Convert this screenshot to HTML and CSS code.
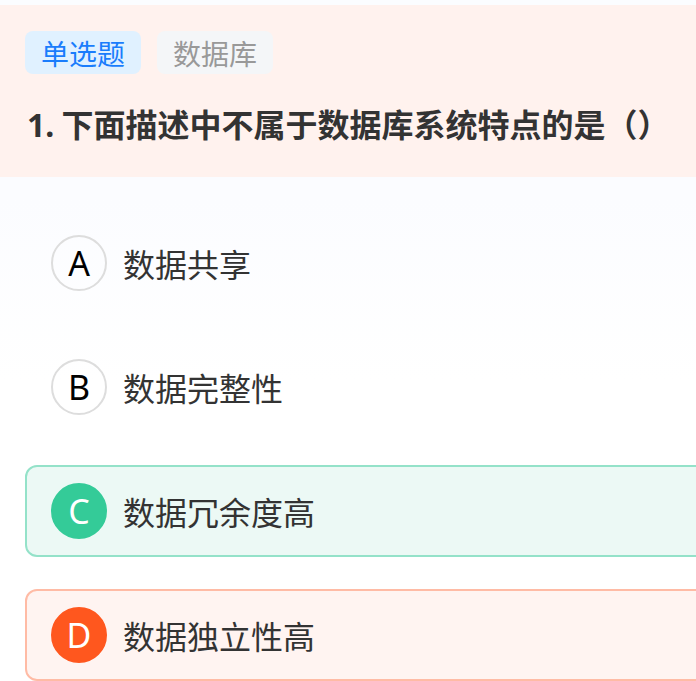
FILE: index.html
```html
<!DOCTYPE html>
<html lang="zh-CN">
<head>
<meta charset="utf-8">
<title>题目</title>
<link rel="stylesheet" href="styles.css">
</head>
<body>
<div class="page">
  <div class="topbar"></div>
  <header class="question">
    <div class="tags">
      <span class="tag tag-type">单选题</span>
      <span class="tag tag-subject">数据库</span>
    </div>
    <h1 class="title"><span class="num">1.</span> 下面描述中不属于数据库系统特点的是（）</h1>
  </header>
  <ul class="options">
    <li class="option"><span class="letter">A</span><span class="text">数据共享</span></li>
    <li class="option"><span class="letter">B</span><span class="text">数据完整性</span></li>
    <li class="option option-right"><span class="letter">C</span><span class="text">数据冗余度高</span></li>
    <li class="option option-wrong"><span class="letter">D</span><span class="text">数据独立性高</span></li>
  </ul>
</div>
</body>
</html>
```
FILE: styles.css
```css
html, body {
  margin: 0;
  padding: 0;
  overflow: hidden;
  background: #ffffff;
}
.page {
  width: 750px;
  font-family: "Noto Sans CJK SC", "Noto Sans", sans-serif;
  color: #333333;
  background: linear-gradient(#fbfcff 0, #fbfcff 200px, #ffffff 380px);
}
.topbar {
  height: 5px;
  background: #fbfdff;
}
.question {
  background: #fff2ee;
  padding: 26px 25px 0 25px;
  height: 172px;
  box-sizing: border-box;
}
.tags {
  display: flex;
  gap: 16px;
}
.tag {
  display: inline-flex;
  align-items: center;
  height: 43px;
  padding: 0 16px;
  border-radius: 8px;
  font-size: 28px;
  line-height: 1;
}
.tag-type {
  background: #e0f1ff;
  color: #1a7dfc;
}
.tag-subject {
  background: #f4f6f8;
  color: #999999;
}
.title {
  margin: 27px 0 0 2px;
  font-size: 32px;
  line-height: 44px;
  font-weight: 700;
  color: #333333;
  white-space: nowrap;
}
.num {
  font-family: "Noto Sans", sans-serif;
}
.options {
  list-style: none;
  margin: 0;
  padding: 40px 25px 0 25px;
  display: flex;
  flex-direction: column;
  gap: 32px;
}
.option {
  display: flex;
  align-items: center;
  gap: 16px;
  height: 92px;
  box-sizing: border-box;
  padding: 0 24px;
  border: 2px solid transparent;
  border-radius: 12px;
}
.letter {
  width: 56px;
  height: 56px;
  box-sizing: border-box;
  border: 2px solid #dddddd;
  border-radius: 50%;
  display: flex;
  align-items: center;
  justify-content: center;
  font-family: "Noto Sans", sans-serif;
  font-size: 34px;
  line-height: 1;
  color: #000000;
  flex: none;
}
.text {
  font-size: 32px;
  color: #333333;
}
.option-right {
  background: #ecf9f5;
  border-color: #94e2c9;
}
.option-right .letter {
  background: #34cb98;
  border-color: #34cb98;
  color: #ffffff;
}
.option-wrong {
  background: #fff4f1;
  border-color: #ffbba5;
}
.option-wrong .letter {
  background: #ff571e;
  border-color: #ff571e;
  color: #ffffff;
}
```
